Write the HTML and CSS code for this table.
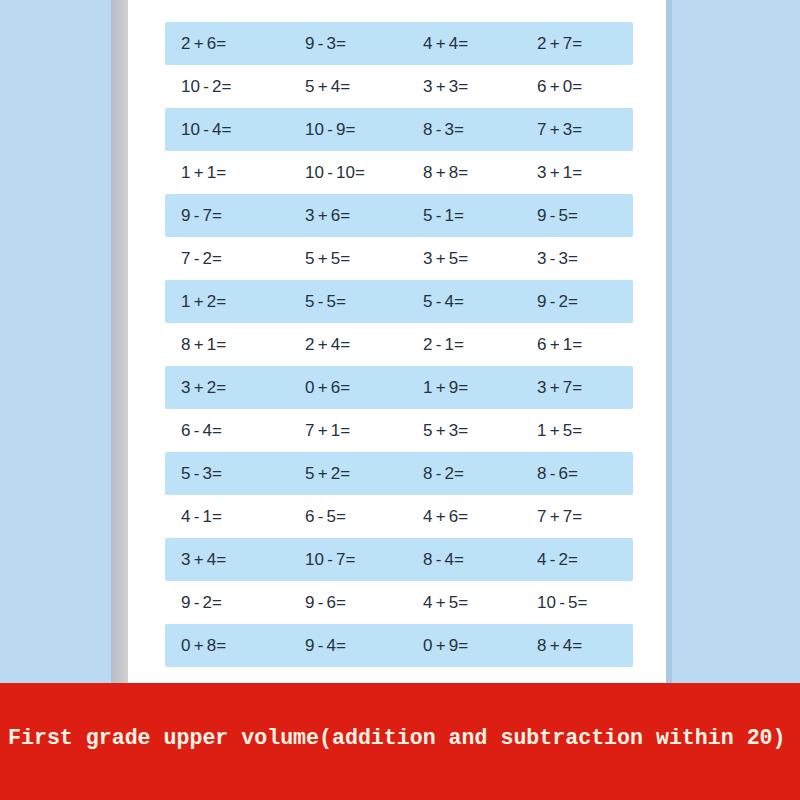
FILE: index.html
```html
<!DOCTYPE html>
<html>
<head>
<meta charset="utf-8">
<link rel="stylesheet" href="styles.css">
</head>
<body>
<div class="desk">
  <div class="spine"></div>
  <div class="paper">
    <div class="row blue"><span>2 + 6=</span><span>9 - 3=</span><span>4 + 4=</span><span>2 + 7=</span></div>
    <div class="row"><span>10 - 2=</span><span>5 + 4=</span><span>3 + 3=</span><span>6 + 0=</span></div>
    <div class="row blue"><span>10 - 4=</span><span>10 - 9=</span><span>8 - 3=</span><span>7 + 3=</span></div>
    <div class="row"><span>1 + 1=</span><span>10 - 10=</span><span>8 + 8=</span><span>3 + 1=</span></div>
    <div class="row blue"><span>9 - 7=</span><span>3 + 6=</span><span>5 - 1=</span><span>9 - 5=</span></div>
    <div class="row"><span>7 - 2=</span><span>5 + 5=</span><span>3 + 5=</span><span>3 - 3=</span></div>
    <div class="row blue"><span>1 + 2=</span><span>5 - 5=</span><span>5 - 4=</span><span>9 - 2=</span></div>
    <div class="row"><span>8 + 1=</span><span>2 + 4=</span><span>2 - 1=</span><span>6 + 1=</span></div>
    <div class="row blue"><span>3 + 2=</span><span>0 + 6=</span><span>1 + 9=</span><span>3 + 7=</span></div>
    <div class="row"><span>6 - 4=</span><span>7 + 1=</span><span>5 + 3=</span><span>1 + 5=</span></div>
    <div class="row blue"><span>5 - 3=</span><span>5 + 2=</span><span>8 - 2=</span><span>8 - 6=</span></div>
    <div class="row"><span>4 - 1=</span><span>6 - 5=</span><span>4 + 6=</span><span>7 + 7=</span></div>
    <div class="row blue"><span>3 + 4=</span><span>10 - 7=</span><span>8 - 4=</span><span>4 - 2=</span></div>
    <div class="row"><span>9 - 2=</span><span>9 - 6=</span><span>4 + 5=</span><span>10 - 5=</span></div>
    <div class="row blue"><span>0 + 8=</span><span>9 - 4=</span><span>0 + 9=</span><span>8 + 4=</span></div>
  </div>
  <div class="edge"></div>
</div>
<div class="banner">First grade upper volume(addition and subtraction within 20)</div>
</body>
</html>
```

FILE: styles.css
```css
html, body {
  margin: 0;
  padding: 0;
}
body {
  background: #bad8ef;
  width: 800px;
  height: 800px;
  overflow: hidden;
}
.desk {
  display: flex;
  height: 683px;
}
.spine {
  margin-left: 111px;
  width: 17px;
  background: linear-gradient(to right, #aebfd4 0, #bcc0c8 3px, #c6c6ca 10px, #d2d2d4 17px);
}
.paper {
  width: 538px;
  background: #ffffff;
  box-sizing: border-box;
  padding: 22px 33px 0 37px;
}
.edge {
  width: 6px;
  background: #a9c9e6;
}
.row {
  display: grid;
  grid-template-columns: 124px 118px 114px 1fr;
  align-items: center;
  height: 43px;
  padding-left: 16px;
  font-family: "Liberation Sans", Arial, sans-serif;
  font-size: 17px;
  color: #263241;
  word-spacing: -1.5px;
}
.row.blue {
  background: #bde1f6;
  border-radius: 2px;
}
.banner {
  height: 117px;
  background: #dd1f13;
  color: #fff3e6;
  font-family: "Liberation Mono", "Courier New", monospace;
  font-weight: bold;
  font-size: 21.6px;
  line-height: 22px;
  padding: 44px 0 0 8px;
  box-sizing: border-box;
  white-space: nowrap;
}
```
